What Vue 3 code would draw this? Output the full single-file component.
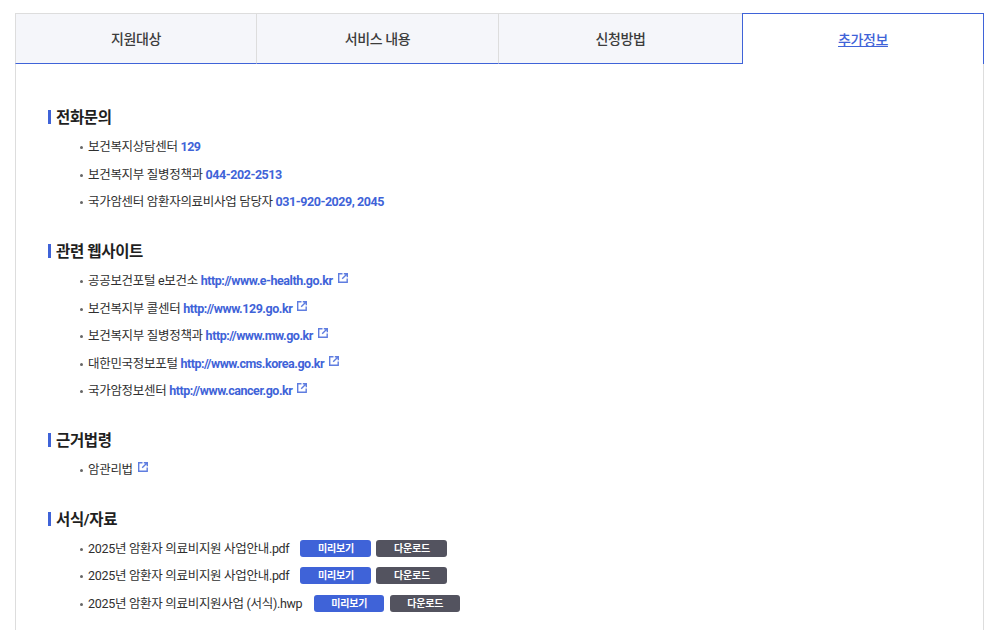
<script setup>
const tabs = [
  { label: '지원대상' },
  { label: '서비스 내용' },
  { label: '신청방법' },
  { label: '추가정보', active: true }
]
const phones = [
  { name: '보건복지상담센터', val: '129' },
  { name: '보건복지부 질병정책과', val: '044-202-2513' },
  { name: '국가암센터 암환자의료비사업 담당자', val: '031-920-2029, 2045' }
]
const sites = [
  { name: '공공보건포털 e보건소', val: 'http://www.e-health.go.kr' },
  { name: '보건복지부 콜센터', val: 'http://www.129.go.kr' },
  { name: '보건복지부 질병정책과', val: 'http://www.mw.go.kr' },
  { name: '대한민국정보포털', val: 'http://www.cms.korea.go.kr' },
  { name: '국가암정보센터', val: 'http://www.cancer.go.kr' }
]
const files = [
  '2025년 암환자 의료비지원 사업안내.pdf',
  '2025년 암환자 의료비지원 사업안내.pdf',
  '2025년 암환자 의료비지원사업 (서식).hwp'
]
</script>

<template>
  <div class="page">
    <nav class="tabs">
      <a v-for="t in tabs" :key="t.label" class="tab" :class="{ active: t.active }">{{ t.label }}</a>
    </nav>
    <main class="panel">
      <section class="sec first">
        <h3 class="title">전화문의</h3>
        <ul class="list">
          <li v-for="p in phones" :key="p.name" class="item">{{ p.name }} <b class="val">{{ p.val }}</b></li>
        </ul>
      </section>
      <section class="sec">
        <h3 class="title">관련 웹사이트</h3>
        <ul class="list">
          <li v-for="s in sites" :key="s.val" class="item">
            {{ s.name }} <a class="val link">{{ s.val }}</a>
            <svg class="ext" width="10" height="10" viewBox="0 0 10 10" fill="none" stroke="#5f7de0" stroke-width="1.4">
              <path d="M4.5.8H.7v8.5h8.5V5.6" />
              <path d="M4.2 5.8 9 1M5.8.7h3.5v3.5" />
            </svg>
          </li>
        </ul>
      </section>
      <section class="sec law">
        <h3 class="title">근거법령</h3>
        <ul class="list">
          <li class="item">
            암관리법
            <svg class="ext law-ext" width="10" height="10" viewBox="0 0 10 10" fill="none" stroke="#5f7de0" stroke-width="1.4">
              <path d="M4.5.8H.7v8.5h8.5V5.6" />
              <path d="M4.2 5.8 9 1M5.8.7h3.5v3.5" />
            </svg>
          </li>
        </ul>
      </section>
      <section class="sec forms">
        <h3 class="title">서식/자료</h3>
        <ul class="list">
          <li v-for="(f, i) in files" :key="i" class="item file">
            <span>{{ f }}</span>
            <span class="btn blue">미리보기</span>
            <span class="btn dark">다운로드</span>
          </li>
        </ul>
      </section>
    </main>
  </div>
</template>

<style>
html, body { margin: 0; background: #fff; overflow: hidden; }
</style>

<style scoped>
.page {
  width: 998px;
  height: 630px;
  padding: 13px 14px 0 15px;
  box-sizing: border-box;
  overflow: hidden;
  font-family: Roboto, "Noto Sans CJK KR", sans-serif;
  color: #333;
}
.tabs {
  display: grid;
  grid-template-columns: 241px 242px 244px 242px;
  height: 51px;
}
.tab {
  display: flex;
  align-items: center;
  justify-content: center;
  box-sizing: border-box;
  background: #f5f6fa;
  border-top: 1px solid #dddddd;
  border-left: 1px solid #dddddd;
  border-bottom: 1px solid #3f63d8;
  font-size: 14px;
  font-weight: 500;
  letter-spacing: -0.4px;
  color: #3c3c3c;
  padding-bottom: 2px;
}
.tab.active {
  background: #fff;
  border: 1px solid #3f63d8;
  border-bottom: 0;
  color: #3f63d8;
  text-decoration: underline;
  padding-bottom: 0;
}
.panel {
  border-left: 1px solid #dddddd;
  border-right: 1px solid #dddddd;
  padding: 33px 32px 0;
  height: 566px;
  box-sizing: border-box;
}
.sec { margin-top: 25.5px; }
.sec.first { margin-top: 10px; }
.sec.law { margin-top: 25px; }
.sec.forms { margin-top: 25px; }
.title {
  margin: 0;
  padding-left: 8px;
  position: relative;
  font-size: 15.5px;
  line-height: 22px;
  font-weight: 700;
  letter-spacing: -0.35px;
  color: #1f1f1f;
}
.title::before {
  content: "";
  position: absolute;
  left: 0;
  top: 3px;
  width: 3px;
  height: 14px;
  background: #3f63d8;
}
.list {
  list-style: none;
  margin: 4px 0 0;
  padding: 0 0 0 32px;
}
.law .list { margin-top: 4.5px; }
.item {
  position: relative;
  padding-left: 8px;
  height: 27.5px;
  line-height: 27.5px;
  font-size: 12.5px;
  letter-spacing: -0.3px;
  color: #2f2f2f;
  white-space: nowrap;
}
.item::before {
  content: "";
  position: absolute;
  left: 0;
  top: 13px;
  width: 3px;
  height: 3px;
  border-radius: 50%;
  background: #666;
}
.val {
  font-weight: 700;
  letter-spacing: -0.45px;
  color: #3f63d8;
}
.link { letter-spacing: -0.47px; }
.ext { margin-left: 5px; vertical-align: 2px; }
.law-ext { margin-left: 2px; }
.file { display: flex; align-items: center; }
.btn {
  display: flex;
  align-items: center;
  justify-content: center;
  height: 17px;
  border-radius: 3px;
  color: #fff;
  font-size: 10px;
  font-weight: 700;
  letter-spacing: -0.2px;
}
.blue { width: 71px; margin-left: 11px; background: #3f63d8; }
.dark { width: 71px; margin-left: 5px; background: #53535f; }
.file:last-child .blue { width: 70px; margin-left: 12px; }
.file:last-child .dark { width: 70px; margin-left: 6px; }
</style>
